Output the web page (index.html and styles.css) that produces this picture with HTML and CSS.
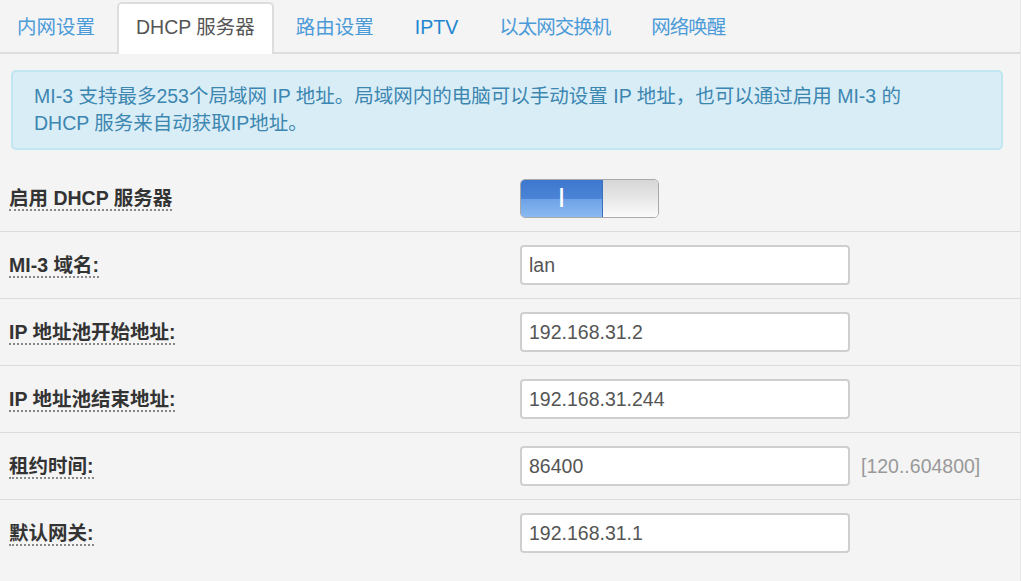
FILE: index.html
```html
<!DOCTYPE html>
<html lang="zh-CN">
<head>
<meta charset="utf-8">
<title>DHCP 服务器</title>
<link rel="stylesheet" href="styles.css">
</head>
<body>
<div class="page">
  <ul class="tabs">
    <li class="tab">内网设置</li>
    <li class="tab active">DHCP 服务器</li>
    <li class="tab">路由设置</li>
    <li class="tab strong">IPTV</li>
    <li class="tab compact">以太网交换机</li>
    <li class="tab compact">网络唤醒</li>
  </ul>

  <div class="alert">MI-3 支持最多253个局域网 IP 地址。局域网内的电脑可以手动设置 IP 地址，也可以通过启用 MI-3 的<br>DHCP 服务来自动获取IP地址。</div>

  <div class="form">
    <div class="row">
      <div class="label-cell"><span class="label">启用 DHCP 服务器</span></div>
      <div class="control">
        <div class="switch">
          <span class="switch-on">I</span>
          <span class="switch-off"></span>
        </div>
      </div>
    </div>
    <div class="row">
      <div class="label-cell"><span class="label">MI-3 域名:</span></div>
      <div class="control"><input class="field" type="text" value="lan"></div>
    </div>
    <div class="row">
      <div class="label-cell"><span class="label">IP 地址池开始地址:</span></div>
      <div class="control"><input class="field" type="text" value="192.168.31.2"></div>
    </div>
    <div class="row">
      <div class="label-cell"><span class="label">IP 地址池结束地址:</span></div>
      <div class="control"><input class="field" type="text" value="192.168.31.244"></div>
    </div>
    <div class="row">
      <div class="label-cell"><span class="label">租约时间:</span></div>
      <div class="control"><input class="field" type="text" value="86400"></div>
      <div class="hint">[120..604800]</div>
    </div>
    <div class="row last">
      <div class="label-cell"><span class="label">默认网关:</span></div>
      <div class="control"><input class="field" type="text" value="192.168.31.1"></div>
    </div>
  </div>
</div>
</body>
</html>
```

FILE: styles.css
```css
html, body {
  margin: 0;
  padding: 0;
  background: #f4f4f4;
}

body {
  font-family: "Liberation Sans", "Noto Sans CJK SC", sans-serif;
  font-size: 19.5px;
  color: #333;
}

.page {
  width: 1020px;
  min-height: 581px;
  border-right: 1px solid #e6e6e6;
}

.tabs {
  list-style: none;
  margin: 0 0 0 -2px;
  padding: 0;
  display: flex;
  height: 52px;
  border-bottom: 2px solid #dddddd;
}

.tab {
  box-sizing: border-box;
  height: 52px;
  margin: 2px 3px -2px 0;
  padding: 0 17px 2px;
  line-height: 46px;
  border: 2px solid transparent;
  border-bottom: none;
  border-radius: 5px 5px 0 0;
  color: #4c9bd9;
  font-size: 19.5px;
  white-space: nowrap;
}

.tab.compact {
  letter-spacing: -1px;
}

.tab.strong {
  color: #1f86d1;
}

.tab.active {
  background: #ffffff;
  border-color: #dddddd;
  color: #555555;
}

.alert {
  margin: 16px 17px 15px 11px;
  padding: 11px 21px;
  background: #d9edf7;
  border: 2px solid #bfe6f1;
  border-radius: 5px;
  color: #3c86b0;
  font-size: 19.5px;
  line-height: 27px;
}

.row {
  display: flex;
  align-items: center;
  height: 66px;
  padding-left: 9px;
  border-bottom: 1px solid #dcdcdc;
}

.row.last {
  border-bottom: none;
}

.label-cell {
  width: 511px;
  flex: none;
}

.label {
  font-weight: bold;
  color: #333;
  font-size: 19.5px;
  line-height: 22px;
  border-bottom: 2px dotted #888;
}

.control {
  flex: none;
}

.field {
  box-sizing: border-box;
  width: 330px;
  height: 40px;
  padding: 0 7px;
  margin: 0;
  border: 2px solid #cfcfcf;
  border-radius: 4px;
  background: #ffffff;
  font-family: "Liberation Sans", sans-serif;
  font-size: 19.5px;
  color: #555555;
  outline: none;
}

.hint {
  margin-left: 11px;
  color: #999999;
  font-size: 19.5px;
}

.switch {
  display: flex;
  width: 139px;
  height: 39px;
  box-sizing: border-box;
  border: 1px solid #a9a9a9;
  border-radius: 5px;
  overflow: hidden;
}

.switch-on {
  width: 81px;
  flex: none;
  background: linear-gradient(to bottom, #3d78cf 0%, #4b84d6 50%, #6ea2e6 52%, #8bbaf1 100%);
  border-right: 1px solid #3b6fbc;
  color: #ffffff;
  text-align: center;
  line-height: 37px;
  font-size: 27px;
  font-family: "Liberation Sans", sans-serif;
  font-weight: normal;
}

.switch-off {
  flex: 1;
  background: linear-gradient(to bottom, #d6d6d6 0%, #e9e9e9 55%, #fbfbfb 100%);
}
```
